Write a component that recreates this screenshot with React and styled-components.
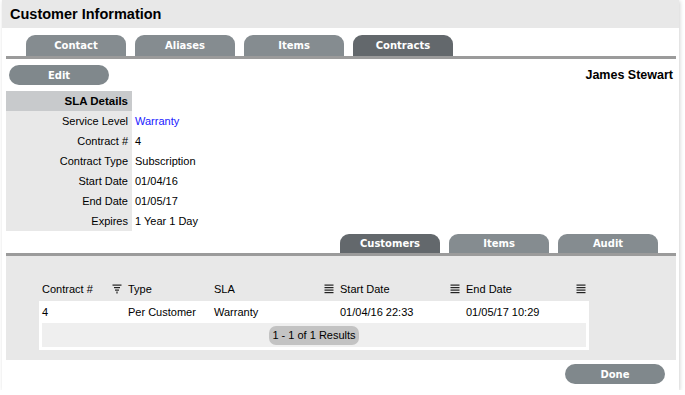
import styled, { createGlobalStyle } from "styled-components";

const Global = createGlobalStyle`
  body {
    margin: 0;
    background: #fff;
    font-family: "Liberation Sans", Arial, sans-serif;
    font-size: 11px;
    color: #000;
  }
`;

const Panel = styled.div`
  margin: 0 0 0 2px;
  width: 677px;
  height: 390px;
  background: #fff;
  box-shadow: 1px 1px 4px rgba(0, 0, 0, 0.18);
  display: flex;
  flex-direction: column;
`;

const Header = styled.div`
  height: 28px;
  background: #e8e8e8;
  display: flex;
  align-items: center;
  padding-left: 8px;
  font-weight: bold;
  font-size: 14.5px;
`;

const Body = styled.div`
  padding: 7px 3px 0 4px;
  display: flex;
  flex-direction: column;
`;

const TabBar = styled.div`
  display: flex;
  gap: 9px;
  justify-content: ${(p) => (p.$right ? "flex-end" : "flex-start")};
  padding: ${(p) => (p.$right ? "0 18px 0 0" : "0 0 0 20px")};
  border-bottom: 3px solid #9b9b9b;
  height: ${(p) => p.$h || 21}px;
  align-items: flex-end;
`;

const Tab = styled.div`
  width: 100px;
  height: ${(p) => p.$h || 21}px;
  border-radius: 9px 9px 0 0;
  background: ${(p) => (p.$active ? "#63686c" : "#858c90")};
  color: #fff;
  font-family: "DejaVu Sans", Verdana, sans-serif;
  font-weight: bold;
  font-size: 10px;
  display: flex;
  align-items: center;
  justify-content: center;
`;

const ActionRow = styled.div`
  display: flex;
  justify-content: space-between;
  align-items: center;
  margin-top: 6px;
  padding: 0 3px;
  height: 20px;
`;

const PillButton = styled.div`
  width: 100px;
  height: 20px;
  border-radius: 10px;
  background: #80888c;
  color: #fff;
  font-family: "DejaVu Sans", Verdana, sans-serif;
  font-weight: bold;
  font-size: 10px;
  display: flex;
  align-items: center;
  justify-content: center;
`;

const Name = styled.div`
  font-weight: bold;
  font-size: 12.5px;
`;

const Details = styled.div`
  margin-top: 6px;
  display: grid;
  grid-template-columns: 126px 1fr;
  grid-auto-rows: 20px;
`;

const DetailsHead = styled.div`
  background: #c8cacc;
  font-weight: bold;
  font-size: 11.5px;
  display: flex;
  align-items: center;
  justify-content: flex-end;
  padding-right: 4px;
`;

const Label = styled.div`
  background: #e8e8e8;
  display: flex;
  align-items: center;
  justify-content: flex-end;
  padding-right: 4px;
`;

const Value = styled.div`
  display: flex;
  align-items: center;
  padding-left: 3px;
  color: ${(p) => (p.$link ? "#2020ff" : "#000")};
`;

const SubTabs = styled.div`
  margin-top: 3px;
`;

const GrayArea = styled.div`
  background: #e8e8e8;
  padding: 22px 0 10px 33px;
`;

const Grid = styled.div`
  width: 550px;
  display: grid;
  grid-template-columns: 86px 86px 126px 126px 126px;
`;

const HeadCell = styled.div`
  height: 22px;
  display: flex;
  align-items: center;
  justify-content: space-between;
  padding: 0 3px;
  margin-bottom: 1px;
`;

const TableBody = styled.div`
  width: 550px;
  background: #fff;
  padding-bottom: 3px;
`;

const Cell = styled.div`
  height: 22px;
  display: flex;
  align-items: center;
  padding-left: 3px;
`;

const PageRow = styled.div`
  margin: 0 3px;
  height: 24px;
  background: #efefef;
  display: flex;
  align-items: center;
  justify-content: center;
`;

const PageInfo = styled.div`
  background: #c3c3c3;
  border-radius: 7px;
  height: 19px;
  padding: 0 3px;
  display: flex;
  align-items: center;
`;

const Footer = styled.div`
  display: flex;
  justify-content: flex-end;
  padding: 4px 11px 0 0;
`;

const LinesIcon = () => (
  <svg width="10" height="10" viewBox="0 0 10 10">
    {[1, 3.5, 6, 8.5].map((y) => (
      <rect key={y} x="0.5" y={y - 0.5} width="9" height="1.2" fill="#222" />
    ))}
  </svg>
);

const FilterIcon = () => (
  <svg width="10" height="10" viewBox="0 0 10 10">
    <rect x="0.5" y="0.5" width="9" height="1.2" fill="#222" />
    <rect x="2" y="3" width="6" height="1.2" fill="#222" />
    <rect x="3" y="5.5" width="4" height="1.2" fill="#222" />
    <rect x="4.4" y="7.5" width="1.2" height="2" fill="#222" />
  </svg>
);

const details = [
  ["Service Level", "Warranty", true],
  ["Contract #", "4"],
  ["Contract Type", "Subscription"],
  ["Start Date", "01/04/16"],
  ["End Date", "01/05/17"],
  ["Expires", "1 Year 1 Day"],
];

const columns = [
  ["Contract #", <FilterIcon />],
  ["Type", null],
  ["SLA", <LinesIcon />],
  ["Start Date", <LinesIcon />],
  ["End Date", <LinesIcon />],
];

const row = ["4", "Per Customer", "Warranty", "01/04/16 22:33", "01/05/17 10:29"];

export default function App() {
  return (
    <>
      <Global />
      <Panel>
        <Header>Customer Information</Header>
        <Body>
          <TabBar>
            <Tab>Contact</Tab>
            <Tab>Aliases</Tab>
            <Tab>Items</Tab>
            <Tab $active>Contracts</Tab>
          </TabBar>
          <ActionRow>
            <PillButton>Edit</PillButton>
            <Name>James Stewart</Name>
          </ActionRow>
          <Details>
            <DetailsHead>SLA Details</DetailsHead>
            <div />
            {details.flatMap(([l, v, link]) => [
              <Label key={l}>{l}</Label>,
              <Value key={l + "v"} $link={link}>
                {v}
              </Value>,
            ])}
          </Details>
          <SubTabs>
            <TabBar $right $h={19}>
              <Tab $active $h={19}>Customers</Tab>
              <Tab $h={19}>Items</Tab>
              <Tab $h={19}>Audit</Tab>
            </TabBar>
          </SubTabs>
          <GrayArea>
            <Grid>
              {columns.map(([name, icon]) => (
                <HeadCell key={name}>
                  <span>{name}</span>
                  {icon}
                </HeadCell>
              ))}
            </Grid>
            <TableBody>
              <Grid>
                {row.map((v, i) => (
                  <Cell key={i}>{v}</Cell>
                ))}
              </Grid>
              <PageRow>
                <PageInfo>1 - 1 of 1 Results</PageInfo>
              </PageRow>
            </TableBody>
          </GrayArea>
          <Footer>
            <PillButton>Done</PillButton>
          </Footer>
        </Body>
      </Panel>
    </>
  );
}
